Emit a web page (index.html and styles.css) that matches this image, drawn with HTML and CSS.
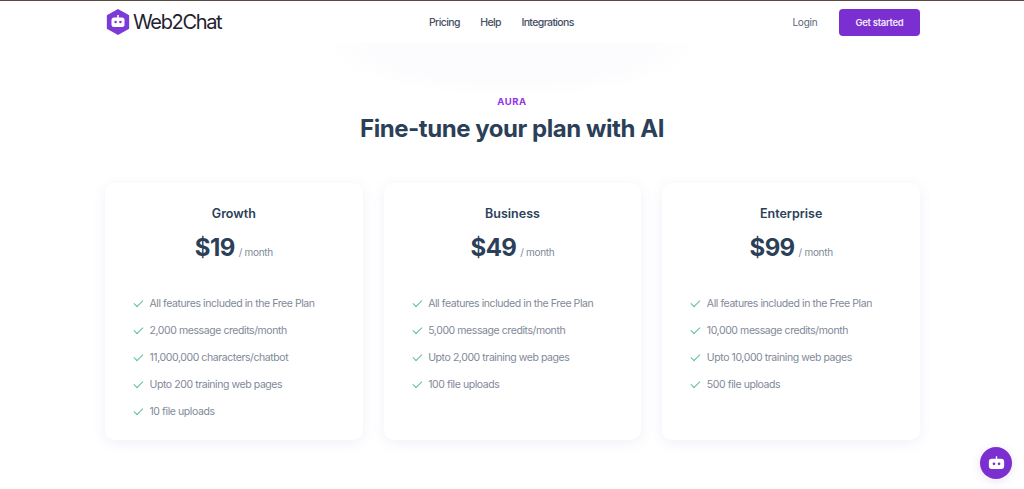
FILE: index.html
```html
<!DOCTYPE html>
<html lang="en">
<head>
    <meta charset="UTF-8">
    <meta name="viewport" content="width=device-width, initial-scale=1.0">
    <title>Web2Chat Pricing</title>
    <link rel="stylesheet" href="styles.css">
</head>
<body>
    <header class="site-header">
        <div class="header-inner">
            <a class="logo" href="#">
                <svg class="logo-icon" viewBox="0 0 24 26" width="24" height="26">
                    <path d="M12 .8 22.4 6.6v12.8L12 25.2 1.6 19.4V6.6Z" fill="#7c3bd6" stroke="#7c3bd6" stroke-width="1.5" stroke-linejoin="round"/>
                    <rect x="11.2" y="6" width="1.6" height="3" fill="#fff"/>
                    <rect x="5.5" y="8.5" width="13" height="9.5" rx="2.5" fill="#fff"/>
                    <circle cx="9.6" cy="13" r="1.3" fill="#7c3bd6"/>
                    <circle cx="14.4" cy="13" r="1.3" fill="#7c3bd6"/>
                </svg>
                <span class="logo-text">Web2Chat</span>
            </a>
            <nav class="main-nav">
                <a href="#">Pricing</a>
                <a href="#">Help</a>
                <a href="#">Integrations</a>
            </nav>
            <div class="header-actions">
                <a class="login-link" href="#">Login</a>
                <a class="get-started" href="#">Get started</a>
            </div>
        </div>
    </header>

    <main>
        <section class="pricing-heading">
            <div class="eyebrow">AURA</div>
            <h1>Fine-tune your plan with AI</h1>
        </section>

        <section class="plans">
            <div class="plan-card">
                <h2>Growth</h2>
                <div class="price"><strong>$19</strong><span>/ month</span></div>
                <ul class="features">
                    <li>All features included in the Free Plan</li>
                    <li>2,000 message credits/month</li>
                    <li>11,000,000 characters/chatbot</li>
                    <li>Upto 200 training web pages</li>
                    <li>10 file uploads</li>
                </ul>
            </div>
            <div class="plan-card">
                <h2>Business</h2>
                <div class="price"><strong>$49</strong><span>/ month</span></div>
                <ul class="features">
                    <li>All features included in the Free Plan</li>
                    <li>5,000 message credits/month</li>
                    <li>Upto 2,000 training web pages</li>
                    <li>100 file uploads</li>
                </ul>
            </div>
            <div class="plan-card">
                <h2>Enterprise</h2>
                <div class="price"><strong>$99</strong><span>/ month</span></div>
                <ul class="features">
                    <li>All features included in the Free Plan</li>
                    <li>10,000 message credits/month</li>
                    <li>Upto 10,000 training web pages</li>
                    <li>500 file uploads</li>
                </ul>
            </div>
        </section>
    </main>

    <button class="chat-bubble" aria-label="Open chat">
        <svg viewBox="0 0 20 16" width="17" height="14">
            <rect x="9.2" y="0" width="1.6" height="4" fill="#fff"/>
            <rect x="1" y="3" width="18" height="12" rx="3.5" fill="#fff"/>
            <circle cx="7" cy="9" r="1.6" fill="#7c2fd0"/>
            <circle cx="13" cy="9" r="1.6" fill="#7c2fd0"/>
        </svg>
    </button>
</body>
</html>
```

FILE: styles.css
```css
* {
    box-sizing: border-box;
}

html, body {
    height: 100%;
}

body {
    margin: 0;
    font-family: Inter, "Noto Sans", sans-serif;
    background-color: #fff;
    color: #2b3a52;
    overflow: hidden;
}

a {
    text-decoration: none;
    color: inherit;
}

.site-header {
    height: 43px;
    background: #fff;
    border-top: 1px solid #5a4a44;
    box-shadow: 0 3px 8px rgba(90, 80, 160, 0.04);
}

.header-inner {
    width: 815px;
    height: 100%;
    margin-left: 105px;
    display: flex;
    align-items: center;
}

.logo {
    display: flex;
    align-items: center;
    gap: 3px;
    margin-left: 1px;
    width: 323px;
}

.logo-text {
    font-size: 20px;
    letter-spacing: -1.35px;
    color: #1f2230;
}

.main-nav {
    display: flex;
    gap: 20.5px;
    font-size: 10.5px;
    font-weight: 500;
    letter-spacing: -0.62px;
    color: #434f63;
}

.header-actions {
    margin-left: auto;
    display: flex;
    align-items: center;
    gap: 21.5px;
}

.login-link {
    font-size: 10px;
    letter-spacing: -0.2px;
    color: #5a6475;
}

.get-started {
    width: 81px;
    height: 27px;
    display: flex;
    align-items: center;
    justify-content: center;
    background: #7c2fd0;
    border-radius: 4px;
    color: #f1e9fb;
    font-size: 9.5px;
    font-weight: 600;
    letter-spacing: -0.3px;
}

main {
    background: radial-gradient(ellipse 190px 55px at 512px 0, #fcfcfe 70%, #fff 100%);
}

.pricing-heading {
    text-align: center;
    padding-top: 53px;
}

.eyebrow {
    font-size: 9.5px;
    line-height: 12px;
    font-weight: 700;
    letter-spacing: 0.6px;
    color: #9333ea;
}

h1 {
    margin: 5px 0 0;
    font-size: 24px;
    line-height: 32px;
    font-weight: 700;
    color: #2b3f58;
    letter-spacing: -0.45px;
}

.plans {
    width: 815px;
    margin: 38px 0 0 105px;
    display: grid;
    grid-template-columns: repeat(3, 1fr);
    gap: 21px;
}

.plan-card {
    height: 257px;
    padding: 23px 28px 0;
    background: #fff;
    border-radius: 10px;
    box-shadow: 0 3px 14px rgba(100, 80, 180, 0.09);
}

h2 {
    margin: 0;
    text-align: center;
    font-size: 12.5px;
    line-height: 16px;
    font-weight: 600;
    color: #2b3f58;
}

.price {
    margin-top: 11px;
    display: flex;
    justify-content: center;
    align-items: baseline;
    gap: 4px;
    line-height: 30px;
}

.price strong {
    font-size: 24px;
    font-weight: 700;
    letter-spacing: -0.6px;
    color: #2b3f58;
}

.price span {
    font-size: 10px;
    letter-spacing: -0.3px;
    color: #7f8999;
}

.features {
    list-style: none;
    margin: 23px 0 0;
    padding: 0;
}

.features li {
    height: 27px;
    display: flex;
    align-items: center;
    font-size: 10.5px;
    letter-spacing: -0.42px;
    color: #7f8999;
}

.features li::before {
    content: "";
    width: 7.5px;
    height: 4px;
    margin: -2px 7px 0 1px;
    border-left: 1px solid #5fbf9f;
    border-bottom: 1px solid #5fbf9f;
    transform: rotate(-45deg);
    flex: none;
}

.chat-bubble {
    position: fixed;
    right: 12px;
    bottom: 10px;
    width: 32px;
    height: 32px;
    padding: 0;
    border: none;
    border-radius: 50%;
    background: #7c2fd0;
    display: flex;
    align-items: center;
    justify-content: center;
    box-shadow: 0 2px 10px rgba(90, 60, 160, 0.15);
}
```
